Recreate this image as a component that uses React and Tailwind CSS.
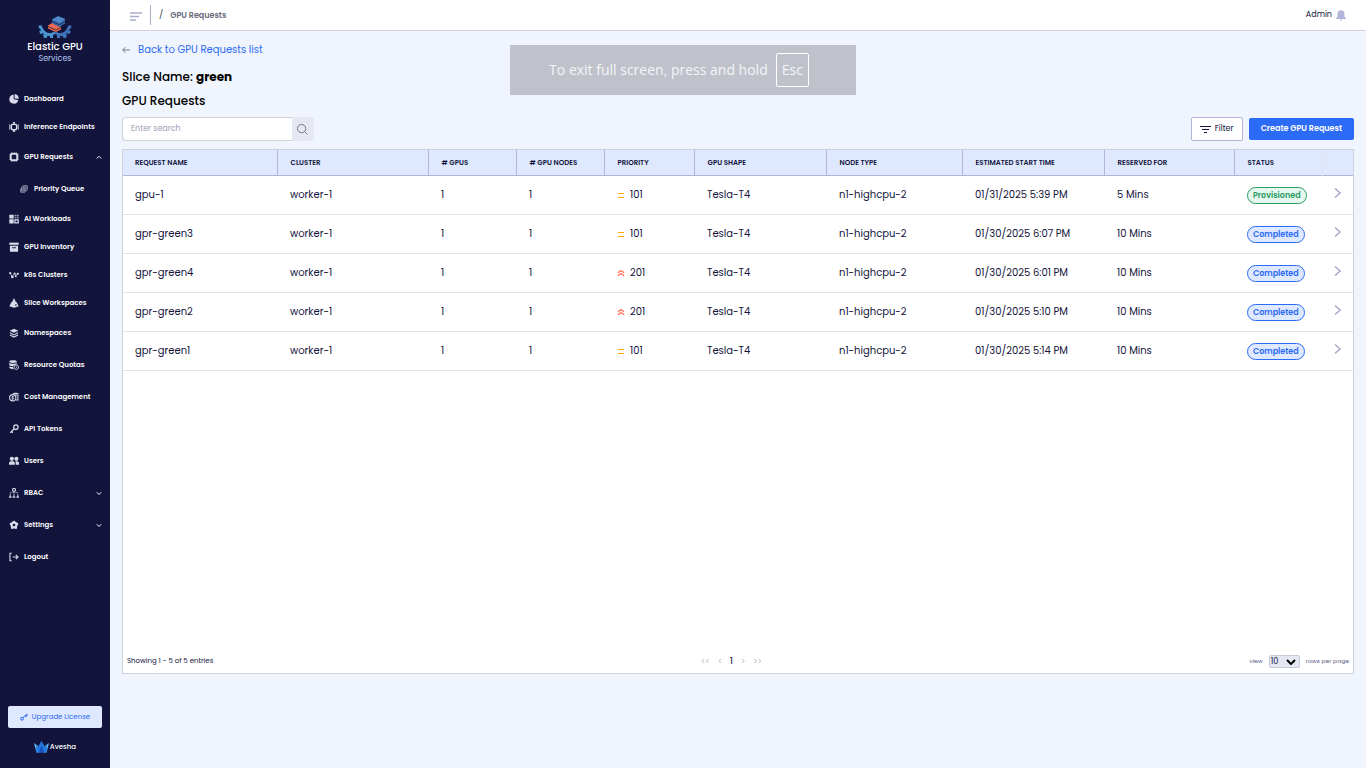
import { useState } from "react";

const navItems = [
  { label: "Dashboard", icon: "dashboard" },
  { label: "Inference Endpoints", icon: "inference" },
  { label: "GPU Requests", icon: "gpu", tall: true, chevron: "up" },
  { label: "Priority Queue", icon: "queue", tall: true, child: true },
  { label: "AI Workloads", icon: "workloads" },
  { label: "GPU Inventory", icon: "inventory" },
  { label: "k8s Clusters", icon: "clusters" },
  { label: "Slice Workspaces", icon: "slice" },
  { label: "Namespaces", icon: "layers", tall: true },
  { label: "Resource Quotas", icon: "quotas", tall: true },
  { label: "Cost Management", icon: "cost", tall: true },
  { label: "API Tokens", icon: "key", tall: true },
  { label: "Users", icon: "users", tall: true },
  { label: "RBAC", icon: "rbac", tall: true, chevron: "down" },
  { label: "Settings", icon: "settings", tall: true, chevron: "down" },
  { label: "Logout", icon: "logout", tall: true },
];

const columns = [
  { label: "Request Name", width: "w-[154px]" },
  { label: "Cluster", width: "w-[151px]" },
  { label: "# GPUs", width: "w-[88px]" },
  { label: "# GPU Nodes", width: "w-[88px]" },
  { label: "Priority", width: "w-[90px]" },
  { label: "GPU Shape", width: "w-[132px]" },
  { label: "Node Type", width: "w-[136px]" },
  { label: "Estimated Start Time", width: "w-[142px]" },
  { label: "Reserved For", width: "w-[130px]" },
];

const requests = [
  { name: "gpu-1", priority: 101, start: "01/31/2025 5:39 PM", reserved: "5 Mins", status: "Provisioned" },
  { name: "gpr-green3", priority: 101, start: "01/30/2025 6:07 PM", reserved: "10 Mins", status: "Completed" },
  { name: "gpr-green4", priority: 201, start: "01/30/2025 6:01 PM", reserved: "10 Mins", status: "Completed" },
  { name: "gpr-green2", priority: 201, start: "01/30/2025 5:10 PM", reserved: "10 Mins", status: "Completed" },
  { name: "gpr-green1", priority: 101, start: "01/30/2025 5:14 PM", reserved: "10 Mins", status: "Completed" },
];

const icons = {
  dashboard: (
    <>
      <path d="M7.5 1A7.200 7.200 0 1 0 14.800 9.500L7.500 8.500Z" />
      <path d="M9 0A7 7 0 0 1 15.500 7.500L9 7Z" />
    </>
  ),
  inference: (
    <>
      <rect x="3.500" y="3.500" width="9" height="9" rx="3" fill="none" stroke="currentColor" strokeWidth="2.600" />
      <path d="M6.500 0h3v2.500h-3zM6.500 13.500h3V16h-3zM0 4h1.500v2H0zM0 7h1.500v2H0zM0 10h1.500v2H0zM14.500 4H16v2h-1.500zM14.500 7H16v2h-1.500zM14.500 10H16v2h-1.500z" />
    </>
  ),
  gpu: (
    <>
      <rect x="3" y="3" width="10" height="10" rx="1" fill="none" stroke="currentColor" strokeWidth="2.800" />
      <path
        d="M3.500 1h9M3.500 15h9M1 3.500v9M15 3.500v9"
        stroke="currentColor"
        strokeWidth="1.500"
        strokeDasharray="2 1.500"
        opacity="0.700"
      />
    </>
  ),
  queue: (
    <g fill="none" stroke="currentColor" strokeWidth="1.600" opacity="0.750">
      <path d="M6 1.500h8.500V9l-3 3H3V5Z" fill="currentColor" fillOpacity="0.350" />
      <path d="M1.500 7v7.500H10l2-2" />
      <circle cx="8.500" cy="7" r="2.200" />
    </g>
  ),
  workloads: (
    <>
      <path d="M0.500 1h7v6h-7zM0.500 8.500h7V15h-7z" />
      <path d="M9 1h3v3H9zM12.800 1h2.700v3h-2.700zM9 5h3v2H9zM12.800 5h2.700v2h-2.700z" opacity="0.700" />
      <path d="M9.500 9.300h5.200v4.900H9.500z" fill="none" stroke="currentColor" strokeWidth="2" />
    </>
  ),
  inventory: (
    <>
      <path d="M0.500 1h15v3.500h-15z" />
      <path fillRule="evenodd" d="M1.500 6h13v9.500h-13zM5 8.500V10h6V8.500z" />
    </>
  ),
  clusters: (
    <>
      <path d="M2 5l3 6 4-6 2 4 3-3" fill="none" stroke="currentColor" strokeWidth="1.200" />
      <circle cx="2" cy="5" r="1.800" />
      <circle cx="5.300" cy="11" r="2.200" />
      <circle cx="9" cy="5.500" r="1.600" />
      <circle cx="10.800" cy="10" r="1.600" />
      <circle cx="14" cy="6" r="1.800" />
    </>
  ),
  slice: (
    <path fillRule="evenodd" d="M8 0l3 6.300h1L15.500 13 8 15.500 0.500 13 4 6.300h1zM10 10v2.500h2V10z" />
  ),
  layers: (
    <>
      <path d="M8 1l7 3.300-7 3.300-7-3.300Z" />
      <path d="M1.500 7.700L8 11l6.500-3.300M1.500 11.200L8 14.500l6.500-3.300" fill="none" stroke="currentColor" strokeWidth="1.700" />
    </>
  ),
  quotas: (
    <>
      <ellipse cx="6.500" cy="2.500" rx="6" ry="2.300" />
      <path d="M0.500 4.500c2 2 10 2 12 0V7C9 7 7 9 7 10c-3 0-5-.4-6.500-1.500zM0.500 10c1.500 1 4 1.300 6 1.300 0 1.500.4 2.700 1.200 3.400C4 14.800 1.500 14 .5 12.500z" />
      <circle cx="11.700" cy="11.500" r="3.500" fill="none" stroke="currentColor" strokeWidth="1.400" />
      <path d="M11.700 9.800v2.200h1.600" fill="none" stroke="currentColor" />
    </>
  ),
  cost: (
    <>
      <circle cx="6" cy="9.200" r="5" fill="none" stroke="currentColor" strokeWidth="1.700" />
      <path d="M7.500 7.200H5.500a1 1 0 0 0 0 2h1a1 1 0 0 1 0 2H4.500M6 6v6.600" fill="none" stroke="currentColor" strokeWidth="1.300" />
      <path d="M5.500 2.500c2-1.500 8.500-1.500 10 0v1.500H10zM11.500 5h4v2.200h-3zM12.800 8.200h2.700v2.200h-2.700zM12 11.500h3.500v2.200H10.500z" />
    </>
  ),
  key: (
    <g fill="none" stroke="currentColor" strokeWidth="2">
      <circle cx="11" cy="5" r="3.500" />
      <path d="M8.500 7.500L2 14M3.500 11.500l2.500 2.500" />
    </g>
  ),
  users: (
    <>
      <circle cx="4.500" cy="4.500" r="3.300" />
      <circle cx="11.800" cy="4.500" r="3.300" />
      <path d="M0 14v-2.500c0-2 2-3 4.800-3s4.500 1 4.500 3V14zM10.700 14v-3c0-1-.3-1.700-.8-2.300 3.400-.5 6.100.5 6.100 2.800V14z" />
    </>
  ),
  rbac: (
    <>
      <circle cx="8" cy="3" r="2.400" fill="none" stroke="currentColor" strokeWidth="1.700" />
      <path d="M2 10V7h12v3M8 6v4" fill="none" stroke="currentColor" strokeWidth="1.200" strokeDasharray="1.500 1" />
      <path d="M1 10.500h2v2H1zM7 10.500h2v2H7zM13 10.500h2v2h-2zM0 13.200h4v2.300H0zM6 13.200h4v2.300H6zM12 13.200h4v2.300h-4z" />
    </>
  ),
  settings: (
    <>
      <circle cx="8" cy="8" r="3.800" fill="none" stroke="currentColor" strokeWidth="3.400" />
      <circle cx="8" cy="3" r="2" />
      <circle cx="3.200" cy="6.500" r="2" />
      <circle cx="12.800" cy="6.500" r="2" />
      <circle cx="5" cy="12.200" r="2" />
      <circle cx="11" cy="12.200" r="2" />
    </>
  ),
  logout: (
    <path d="M4.500 2H1.500v12h3M6 8h8.500M11 4.500L14.500 8 11 11.500" fill="none" stroke="currentColor" strokeWidth="1.700" />
  ),
};

function NavIcon({ name, small }) {
  return (
    <svg viewBox="0 0 16 16" fill="currentColor" className={small ? "size-2 shrink-0" : "size-2.5 shrink-0"}>
      {icons[name]}
    </svg>
  );
}

function Chevron({ up }) {
  return (
    <svg viewBox="0 0 8 8" className="ml-auto size-1.5" fill="none" stroke="currentColor" strokeWidth="1.300">
      <path d={up ? "M1 6L4 3l3 3" : "M1 3l3 3 3-3"} />
    </svg>
  );
}

function Logo() {
  return (
    <svg viewBox="0 0 34 22" className="h-[22px] w-[34px]">
      <g fill="none" strokeWidth="2.800">
        <path d="M3 11.500c1.500 4 4 6.500 8 7 3 .4 4-.5 6-2" stroke="#4a94cf" />
        <path d="M31 11.500c-1.500 4-4 6.500-8 7-3 .4-4-.5-6-2" stroke="#3f74ba" />
      </g>
      <g fill="#4a94cf">
        <path d="M0.500 9.500h3.500v3H1zM1 15.500l3-1.500 1.500 2.500L3 18.500zM5 19l2.500-2 2.500 2-1.500 3H6zM12 18h3v4h-3z" />
        <path fill="#3f74ba" d="M33.500 9.500H30v3h3zM33 15.500L30 14l-1.500 2.500 2.500 2zM29 19l-2.500-2-2.500 2 1.500 3H28zM22 18h-3v4h3z" />
      </g>
      <path d="M10 9.500l4.500-3L23 10.500v3L18 16l-8-3.500z" fill="#ef6a4e" />
      <path d="M10 10.500l8 3.500 5-2.500" stroke="#12143c" strokeWidth="0.700" fill="none" />
      <path d="M14 3.500L20 0.300 27 3v4.500L21.500 11 14 7.500z" fill="#3566a8" />
      <path d="M14 3.500L20 0.300 27 3l-5.500 4z" fill="#5089c8" />
      <path d="M14 5.500l7.500 3.300L27 5.300" stroke="#12143c" strokeWidth="0.600" fill="none" />
    </svg>
  );
}

function Sidebar() {
  return (
    <aside className="flex w-[110px] shrink-0 flex-col bg-[#12143c] text-white">
      <div className="flex h-[85px] flex-col items-center pt-4">
        <Logo />
        <p className="mt-[3px] text-[10px] leading-3 font-medium">Elastic GPU</p>
        <p className="text-[8px] leading-3 text-[#b5c6ee]">Services</p>
      </div>
      <nav>
        {navItems.map((item) => (
          <a
            key={item.label}
            href="#"
            className={`flex items-center text-[7px] font-semibold ${item.tall ? "h-8" : "h-7"} ${
              item.child ? "gap-1.5 pl-5" : "gap-[5px] pl-[9px]"
            } pr-2`}
          >
            <span className="flex text-[#d9daea]">
              <NavIcon name={item.icon} small={item.child} />
            </span>
            {item.label}
            {item.chevron && <Chevron up={item.chevron === "up"} />}
          </a>
        ))}
      </nav>
      <div className="mt-auto px-2 pb-[15px]">
        <button className="flex h-[22px] w-full items-center justify-center gap-1 rounded-xs bg-[#dee8ff] text-[7px] text-[#2c6bf5]">
          <svg viewBox="0 0 16 16" className="size-2" fill="none" stroke="currentColor" strokeWidth="2">
            <circle cx="4" cy="11.500" r="2.800" />
            <path d="M6 9.500C8 6 10 5 15 4M11 5l1 3.500M13.500 1.500v4.500" />
          </svg>
          Upgrade License
        </button>
        <div className="flex items-center justify-center gap-px pt-[13px]">
          <svg viewBox="0 0 15 12" className="h-3 w-[15px]">
            <path d="M0 2l4 3 1.500 6.500H2.500z" fill="#62bdf5" />
            <path d="M15 2l-4 3-1.500 6.500h3z" fill="#62bdf5" />
            <path d="M7.500 0L11 6l2-2-.5 7.500h-10L2 4l2 2z" fill="#2278e0" />
            <path d="M7.500 4l2.500 7.500H5z" fill="#1755bd" />
          </svg>
          <span className="text-[7px] leading-3 font-medium">Avesha</span>
        </div>
      </div>
    </aside>
  );
}

function TopBar() {
  return (
    <header className="flex h-[31px] shrink-0 items-center border-b border-[#cfd1dc] bg-white px-5">
      <button aria-label="Toggle menu" className="pt-0.5 text-[#a9abcd]">
        <svg viewBox="0 0 12 9" className="h-[9px] w-3" stroke="currentColor" strokeWidth="1.600">
          <path d="M0 1h12M0 4.500h9M0 8h6" />
        </svg>
      </button>
      <div className="ml-2 h-5 border-l border-[#a9abcd]" />
      <span className="ml-2 text-[9px] text-[#3c3d4d]">/</span>
      <span className="ml-[7px] pt-px text-[8px] font-semibold text-[#696a7c]">GPU Requests</span>
      <div className="ml-auto flex items-center gap-1">
        <span className="text-[8px] text-[#12143c]">Admin</span>
        <svg viewBox="0 0 10 11" className="h-[11px] w-2.5" fill="#b3b4d8">
          <path d="M5 .3C2.700.3 1.600 2 1.600 4v2.500L.2 8v1h9.600V8L8.400 6.500V4C8.400 2 7.300.3 5 .3zM3.700 9.500h2.600c0 1.500-2.600 1.500-2.600 0z" />
        </svg>
      </div>
    </header>
  );
}

function PriorityIcon({ high }) {
  return high ? (
    <svg viewBox="0 0 8 8" className="size-2" fill="none" stroke="#ff6647" strokeWidth="1.100">
      <path d="M1 4Q4-.2 7 4M1 7Q4 2.800 7 7" />
    </svg>
  ) : (
    <svg viewBox="0 0 8 8" className="size-2" fill="#ffab00" shapeRendering="crispEdges">
      <path d="M1 2h6v1H1zM1 6h6v1H1z" />
    </svg>
  );
}

function StatusBadge({ status }) {
  const colors =
    status === "Provisioned"
      ? "border-[#2a9d63] bg-[#e6f7f0] text-[#2a9d63]"
      : "border-[#2c6bf5] bg-[#dee8ff] text-[#2c6bf5]";
  return (
    <span className={`inline-flex h-[17px] items-center rounded-full border px-[5px] text-[8px] font-semibold ${colors}`}>
      {status}
    </span>
  );
}

function Cell({ children }) {
  return <td className="pr-3 pl-[13px] whitespace-nowrap first:pl-3">{children}</td>;
}

function RequestsTable() {
  return (
    <table className="w-full table-fixed border-collapse text-left">
      <thead>
        <tr className="h-[25px] border-b border-[#b4b3da] bg-[#dee8ff] text-[7px] text-[#12143c] uppercase">
          {columns.map((col) => (
            <th
              key={col.label}
              className={`${col.width} border-r border-[#b4b3da] pt-px pr-3 pl-[13px] font-semibold whitespace-nowrap first:pl-3`}
            >
              {col.label}
            </th>
          ))}
          <th className="w-[88px] border-r border-[#e2e3ec] pt-px pr-3 pl-[13px] font-semibold">Status</th>
          <th className="w-[31px]" aria-label="Open" />
        </tr>
      </thead>
      <tbody>
        {requests.map((r) => (
          <tr key={r.name} className="h-[39px] border-b border-[#e2e3e8] text-[10px] text-[#12143c]">
            <Cell>{r.name}</Cell>
            <Cell>worker-1</Cell>
            <Cell>1</Cell>
            <Cell>1</Cell>
            <Cell>
              <div className="flex items-center gap-[5px]">
                <PriorityIcon high={r.priority > 200} />
                {r.priority}
              </div>
            </Cell>
            <Cell>Tesla-T4</Cell>
            <Cell>n1-highcpu-2</Cell>
            <Cell>{r.start}</Cell>
            <Cell>{r.reserved}</Cell>
            <Cell>
              <div className="flex pt-0.5">
                <StatusBadge status={r.status} />
              </div>
            </Cell>
            <td>
              <button aria-label={`Open ${r.name}`} className="flex w-full justify-center pb-1">
                <svg viewBox="0 0 8 12" className="h-3 w-2" fill="none" stroke="#a9abd0" strokeWidth="1.600">
                  <path d="M1 1.500L6 6l-5 4.500" />
                </svg>
              </button>
            </td>
          </tr>
        ))}
      </tbody>
    </table>
  );
}

function TableFooter() {
  const [rows, setRows] = useState("10");
  return (
    <div className="mt-auto flex items-center justify-between px-1 pb-[5px] text-[7px] text-[#12143c]">
      <p>Showing 1 - 5 of 5 entries</p>
      <div className="flex items-center gap-2 text-[8px] text-[#b6b8ca]">
        <button>&lt;&lt;</button>
        <button>&lt;</button>
        <button className="font-medium text-[#12143c]">1</button>
        <button>&gt;</button>
        <button>&gt;&gt;</button>
      </div>
      <label className="flex items-center gap-1.5 text-[6px] text-[#5c5e86]">
        view
        <span className="relative flex">
          <select
            value={rows}
            onChange={(e) => setRows(e.target.value)}
            className="h-[13px] w-[31px] appearance-none rounded-xs border border-[#c9cad8] bg-[#e5e7f3] pl-px text-[8px] leading-3 text-[#12143c]"
          >
            <option>10</option>
            <option>20</option>
            <option>50</option>
          </select>
          <svg
            viewBox="0 0 10 6"
            className="pointer-events-none absolute top-1 right-1 h-1.5 w-2.5"
            fill="none"
            stroke="#000"
            strokeWidth="2"
          >
            <path d="M1 1l4 4 4-4" />
          </svg>
        </span>
        rows per page
      </label>
    </div>
  );
}

export default function App() {
  return (
    <div className="flex min-h-screen bg-[#eff4fd] font-['Poppins','Inter',sans-serif] text-black">
      <Sidebar />
      <div className="flex min-w-0 flex-1 flex-col">
        <TopBar />
        <main className="flex flex-1 flex-col px-3 pb-[94px]">
          <a href="#" className="mt-[11px] flex items-center gap-2 self-start text-[10px] leading-4 text-[#2c6bf5]">
            <svg viewBox="0 0 8 8" className="size-2" fill="none" stroke="#6d6e80" strokeWidth="0.900">
              <path d="M8 4H.7M3.500 1.200L.7 4l2.800 2.800" />
            </svg>
            Back to GPU Requests list
          </a>
          <h1 className="mt-[11px] text-[12px] leading-4 font-medium">
            Slice Name: <span className="font-bold">green</span>
          </h1>
          <h2 className="mt-2 text-[12px] leading-4 font-medium">GPU Requests</h2>
          <div className="mt-2 flex items-center">
            <div className="flex h-6">
              <input
                aria-label="Search"
                placeholder="Enter search"
                className="w-[170px] rounded-l-sm border border-r-0 border-[#cfd1dc] bg-white px-2 text-[8px] outline-none placeholder:text-[#a0a1b4]"
              />
              <button aria-label="Search" className="flex w-[22px] items-center rounded-r-sm bg-[#e5e7f3] pl-[5px]">
                <svg viewBox="0 0 12 12" className="size-[11px]" fill="none" stroke="#6d6e80">
                  <circle cx="5" cy="5" r="4.500" />
                  <path d="M8.300 8.300L11.300 11.300" />
                </svg>
              </button>
            </div>
            <button className="ml-auto flex h-6 w-[52px] items-center justify-center gap-1 rounded-xs border border-[#b4b3da] bg-white text-[8px] text-[#12143c]">
              <svg viewBox="0 0 11 7" className="h-[7px] w-[11px]" stroke="#12143c">
                <path d="M0 .5h11M2 3.500h7M4 6.500h3" />
              </svg>
              Filter
            </button>
            <button className="ml-1.5 h-[22px] rounded-xs bg-[#2c6bf5] px-3 text-[8px] font-semibold text-white">
              Create GPU Request
            </button>
          </div>
          <section className="mt-2 flex flex-1 flex-col border border-[#cfd1dc] bg-white">
            <RequestsTable />
            <TableFooter />
          </section>
        </main>
      </div>
      <div className="fixed top-[45px] left-1/2 flex h-[50px] w-[346px] -translate-x-1/2 items-center justify-center gap-2 bg-[#bfc2ca] pr-2 font-['Open_Sans','Noto_Sans',sans-serif] text-[14px] text-[#f3f5f9]">
        <span className="pb-0.5">To exit full screen, press and hold</span>
        <kbd className="flex h-[34px] items-center rounded-xs border border-white px-[5px] pb-0.5 font-['Open_Sans','Noto_Sans',sans-serif] text-[14px]">
          Esc
        </kbd>
      </div>
    </div>
  );
}
